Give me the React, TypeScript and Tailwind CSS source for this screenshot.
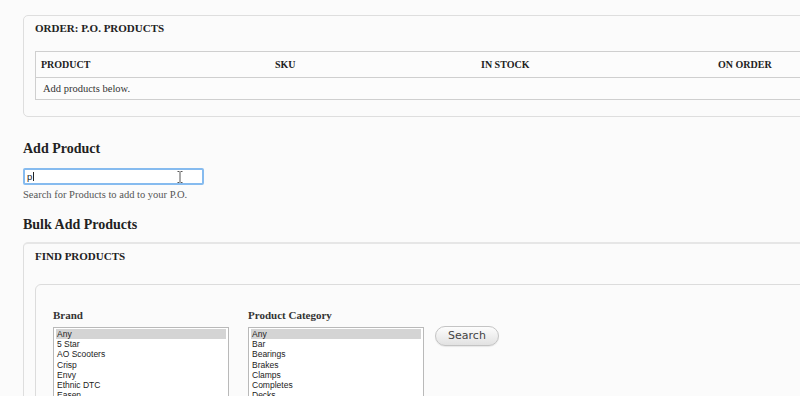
import React from 'react';

const brands = ['Any', '5 Star', 'AO Scooters', 'Crisp', 'Envy', 'Ethnic DTC', 'Easen'];
const categories = ['Any', 'Bar', 'Bearings', 'Brakes', 'Clamps', 'Completes', 'Decks'];

const serif = { fontFamily: '"Liberation Serif", "Times New Roman", serif' };

function ListBox({ items }: { items: string[] }) {
  return (
    <div
      className="w-[176px] h-[90px] border border-[#b9b9b9] bg-white px-[2px] pt-[1px] text-[8.5px] leading-[10.2px] text-[#222]"
      style={{ fontFamily: '"Liberation Sans", Arial, sans-serif' }}
    >
      {items.map((item, i) => (
        <div key={item} className={i === 0 ? 'bg-[#d4d4d4] pl-[1px]' : 'pl-[1px]'}>
          {item}
        </div>
      ))}
    </div>
  );
}

export default function App() {
  return (
    <div className="w-[800px] h-[396px] overflow-hidden bg-[#fbfbfb] text-[#222]" style={serif}>
      <div className="pt-[15px] pl-[23px]">
        {/* order products box */}
        <div className="w-[820px] border border-[#dedede] rounded-[5px] pl-[11px] pt-[6px] pb-[16px]">
          <h2 className="text-[11px] leading-[12px] font-bold">ORDER: P.O. PRODUCTS</h2>
          <div className="mt-[17px] border border-[#cfcfcf] bg-[#fcfcfc]">
            <div className="flex h-[26px] items-center border-b border-[#cfcfcf] text-[10px] font-bold">
              <div className="w-[234px] pl-[5px]">PRODUCT</div>
              <div className="w-[206px] pl-[5px]">SKU</div>
              <div className="w-[237px] pl-[5px]">IN STOCK</div>
              <div className="pl-[5px]">ON ORDER</div>
            </div>
            <div className="h-[21px] flex items-center pl-[7px] text-[10.5px] text-[#333]">
              Add products below.
            </div>
          </div>
        </div>

        {/* add product */}
        <h3 className="mt-[24px] text-[14px] leading-[16px] font-bold">Add Product</h3>
        <div className="relative mt-[11px] w-[181px] h-[17px] rounded-[2px] border-2 border-[#86bbef] bg-white flex items-center pl-[2px]">
          <span
            className="text-[9.5px] leading-[12px] text-[#222]"
            style={{ fontFamily: '"Liberation Sans", Arial, sans-serif' }}
          >
            p
          </span>
          <span className="ml-px w-px h-[9px] bg-[#222]" />
          <svg
            className="absolute left-[152px] top-[1px]"
            width="6"
            height="12"
            viewBox="0 0 6 12"
            fill="none"
            stroke="#555"
            strokeWidth="1"
          >
            <path d="M0.5 0.5h2m1 0h2M3 1v10M0.5 11.5h2m1 0h2" />
          </svg>
        </div>
        <p className="mt-[3px] text-[10.5px] leading-[13px] text-[#555]">
          Search for Products to add to your P.O.
        </p>

        {/* bulk add */}
        <h3 className="mt-[16px] text-[14px] leading-[16px] font-bold">Bulk Add Products</h3>
        <div className="mt-[9px] w-[820px] h-[200px] border border-[#dedede] border-t-[#e6e6e6] border-t-2 rounded-[5px] pl-[11px] pt-[6px]">
          <h2 className="text-[11px] leading-[12px] font-bold">FIND PRODUCTS</h2>
          <div className="mt-[22px] h-[160px] border border-[#dcdcdc] rounded-[6px] pl-[17px] pt-[24px]">
            <div className="flex items-start">
              <div className="w-[195px]">
                <div className="text-[11px] leading-[13px] font-bold text-[#333]">Brand</div>
                <div className="mt-[5px]">
                  <ListBox items={brands} />
                </div>
              </div>
              <div>
                <div className="text-[11px] leading-[13px] font-bold text-[#333]">Product Category</div>
                <div className="mt-[5px]">
                  <ListBox items={categories} />
                </div>
              </div>
              <button
                className="ml-[11px] mt-[17px] w-[64px] h-[20px] rounded-full border border-[#c4c4c4] bg-gradient-to-b from-[#fdfdfd] to-[#e2e2e2] text-[11px] text-[#444] shadow-[0_1px_1px_rgba(0,0,0,0.08)]"
                style={{ fontFamily: '"DejaVu Sans", Verdana, sans-serif' }}
              >
                Search
              </button>
            </div>
          </div>
        </div>
      </div>
    </div>
  );
}
